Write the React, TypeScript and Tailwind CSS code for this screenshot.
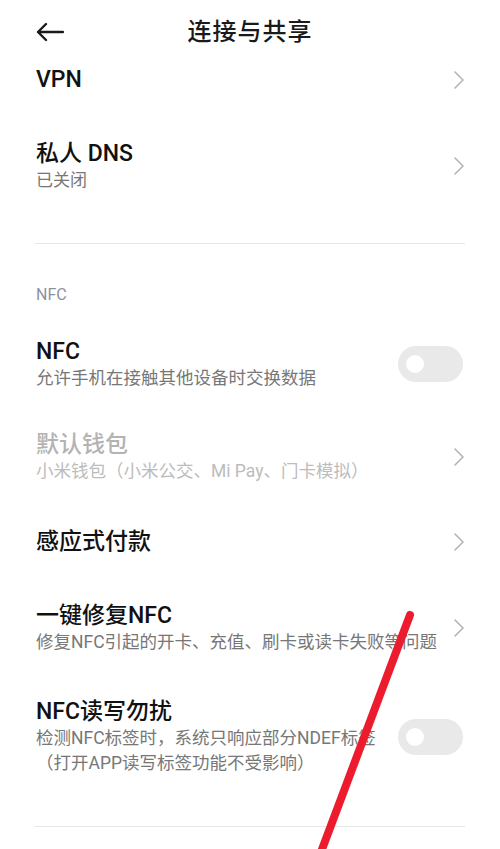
import React from "react";

const font = { fontFamily: 'Roboto, "Noto Sans CJK SC", sans-serif' };

function Chevron() {
  return (
    <svg width="12" height="20" viewBox="0 0 12 20" className="shrink-0">
      <path d="M2 2 L10 10 L2 18" fill="none" stroke="#b3b3b3" strokeWidth="1.6" strokeLinecap="round" strokeLinejoin="round" />
    </svg>
  );
}

function Toggle() {
  return (
    <div className="w-[65px] h-[36px] rounded-full bg-[#e9e9e9] flex items-center pl-[8px] shrink-0">
      <div className="w-[18px] h-[18px] rounded-full bg-white" />
    </div>
  );
}

export default function App() {
  return (
    <div className="relative w-[500px] h-[849px] bg-white overflow-hidden" style={font}>
      {/* header */}
      <div className="relative h-[64px] flex items-center justify-center">
        <svg width="28" height="20" viewBox="0 0 28 20" className="absolute left-[36px] top-[22px]">
          <path d="M27 10 H2 M10 2 L2 10 L10 18" fill="none" stroke="#1a1a1a" strokeWidth="2.4" strokeLinecap="round" strokeLinejoin="round" />
        </svg>
        <div className="text-[24px] text-[#1a1a1a] font-medium tracking-[1px]">连接与共享</div>
      </div>

      {/* VPN */}
      <div className="mt-[2px] h-[28px] flex items-center justify-between pl-[36px] pr-[35px]">
        <div className="text-[23px] leading-[28px] text-[#111] font-medium">VPN</div>
        <Chevron />
      </div>

      {/* DNS */}
      <div className="mt-[46px] flex items-center justify-between pl-[36px] pr-[35px]">
        <div>
          <div className="text-[23px] leading-[28px] text-[#111] font-medium">私人 DNS</div>
          <div className="text-[17px] leading-[24px] text-[#777]">已关闭</div>
        </div>
        <Chevron />
      </div>

      <div className="mt-[51px] mx-[35px] h-px bg-[#e6e6e6]" />

      <div className="mt-[41px] pl-[36px] h-[20px] flex items-center text-[16px] text-[#8f8fa3]">NFC</div>

      {/* NFC */}
      <div className="mt-[33px] flex items-center justify-between pl-[36px] pr-[37px]">
        <div>
          <div className="text-[23px] leading-[28px] text-[#111] font-medium">NFC</div>
          <div className="text-[17.5px] leading-[24px] text-[#777]">允许手机在接触其他设备时交换数据</div>
        </div>
        <Toggle />
      </div>

      {/* default wallet */}
      <div className="mt-[41px] flex items-center justify-between pl-[36px] pr-[35px]">
        <div>
          <div className="text-[23px] leading-[28px] text-[#b3b3b3] font-medium">默认钱包</div>
          <div className="text-[17.5px] leading-[24px] text-[#bcbcbc]">小米钱包（小米公交、Mi Pay、门卡模拟）</div>
        </div>
        <Chevron />
      </div>

      {/* 感应式付款 */}
      <div className="mt-[45px] h-[28px] flex items-center justify-between pl-[36px] pr-[35px]">
        <div className="text-[23px] leading-[28px] text-[#111] font-medium">感应式付款</div>
        <Chevron />
      </div>

      {/* 一键修复NFC */}
      <div className="mt-[46px] flex items-center justify-between pl-[36px] pr-[35px]">
        <div>
          <div className="text-[23px] leading-[28px] text-[#111] font-medium">一键修复NFC</div>
          <div className="text-[17.5px] leading-[24px] text-[#777]">修复NFC引起的开卡、充值、刷卡或读卡失败等问题</div>
        </div>
        <Chevron />
      </div>

      {/* NFC读写勿扰 */}
      <div className="mt-[44px] flex items-center justify-between pl-[36px] pr-[37px]">
        <div className="w-[360px]">
          <div className="text-[23px] leading-[28px] text-[#111] font-medium">NFC读写勿扰</div>
          <div className="text-[17.5px] leading-[25px] text-[#777] whitespace-nowrap">检测NFC标签时，系统只响应部分NDEF标签</div>
          <div className="text-[17.5px] leading-[25px] text-[#777]">（打开APP读写标签功能不受影响）</div>
        </div>
        <Toggle />
      </div>

      <div className="mt-[50px] mx-[35px] h-px bg-[#e6e6e6]" />

      {/* red annotation line */}
      <svg className="absolute left-0 top-0 pointer-events-none" width="500" height="849" viewBox="0 0 500 849">
        <line x1="410" y1="615" x2="318" y2="860" stroke="#ec1c2e" strokeWidth="8" strokeLinecap="round" />
      </svg>
    </div>
  );
}
